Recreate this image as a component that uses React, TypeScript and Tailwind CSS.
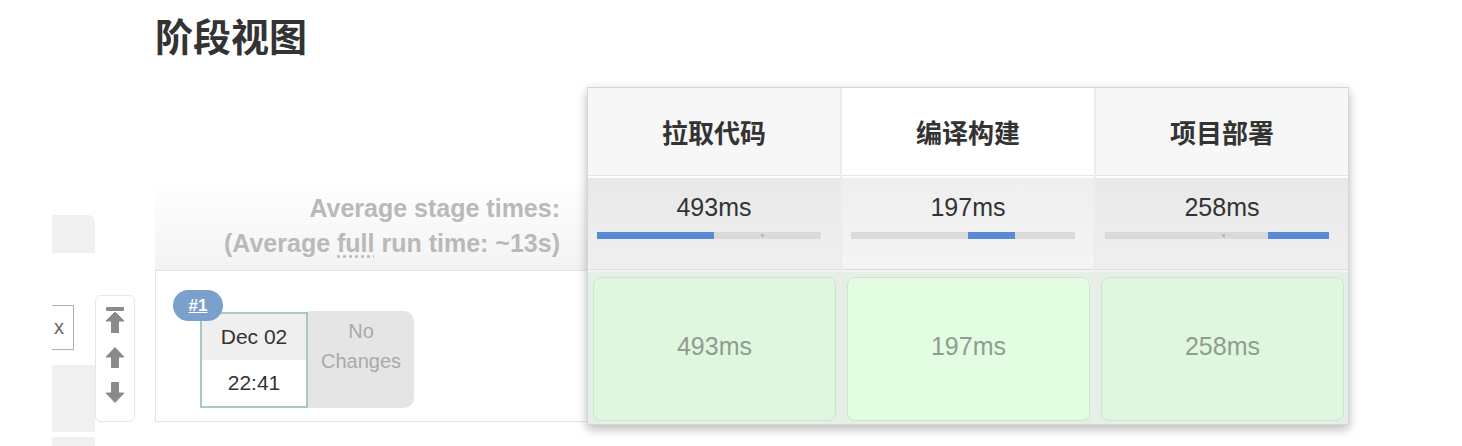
import React from "react";

const stages = [
  { name: "拉取代码", avg: "493ms", start: 0, width: 117, tick: 164, head: "bg-[#f7f7f7]", avgBg: "from-[#e9e9e9] to-[#efefef]", cell: "bg-[#dff7df]" },
  { name: "编译构建", avg: "197ms", start: 117, width: 47, tick: -1, head: "bg-white", avgBg: "from-[#efefef] to-[#f4f4f4]", cell: "bg-[#e3fde3]" },
  { name: "项目部署", avg: "258ms", start: 163, width: 61, tick: 117, head: "bg-[#f7f7f7]", avgBg: "from-[#e9e9e9] to-[#efefef]", cell: "bg-[#dff7df]" },
];

function TopIcon() {
  return (
    <svg width="20" height="26" viewBox="0 0 20 26">
      <rect x="1" y="0" width="18" height="4" rx="1" fill="#8a8a8a" />
      <polygon points="10,5 19,14 13.5,14 13.5,26 6.5,26 6.5,14 1,14" fill="#8a8a8a" strokeLinejoin="round" stroke="#8a8a8a" strokeWidth="1" />
    </svg>
  );
}
function UpIcon() {
  return (
    <svg width="20" height="21" viewBox="0 0 20 21">
      <polygon points="10,0.5 19,10 13.5,10 13.5,20.5 6.5,20.5 6.5,10 1,10" fill="#8a8a8a" strokeLinejoin="round" stroke="#8a8a8a" strokeWidth="1" />
    </svg>
  );
}
function DownIcon() {
  return (
    <svg width="20" height="21" viewBox="0 0 20 21">
      <polygon points="10,20.5 19,11 13.5,11 13.5,0.5 6.5,0.5 6.5,11 1,11" fill="#8a8a8a" strokeLinejoin="round" stroke="#8a8a8a" strokeWidth="1" />
    </svg>
  );
}

export default function App() {
  return (
    <div className="w-[1462px] h-[446px] bg-white overflow-hidden font-['Liberation_Sans','Noto_Sans_CJK_SC',sans-serif]">
      <div className="flex pl-[52px]">
        {/* partial sidebar */}
        <div className="mt-[215px] w-[43px] flex flex-col">
          <div className="h-[38px] bg-[#f0f0f0] rounded-tr-[7px]" />
          <div className="h-[112px] bg-white pt-[52px]">
            <div className="w-[22px] h-[45px] border-y border-r border-[#b0b0b0] bg-white text-[20px] leading-[43px] text-[#666] pl-[2px]">x</div>
          </div>
          <div className="h-[67px] bg-[#f0f0f0]" />
          <div className="h-[5px] bg-white" />
          <div className="h-[20px] bg-[#f0f0f0]" />
        </div>

        {/* arrows */}
        <div className="mt-[295px] w-[40px] h-[127px] border border-[#e6e6e6] rounded-[6px] flex flex-col items-center pt-[11px] gap-[14px]">
          <TopIcon />
          <UpIcon />
          <DownIcon />
        </div>

        {/* stage view */}
        <div className="ml-[20px] flex flex-col">
          <div className="h-[87px] pt-[15px]">
            <h2 className="font-['Noto_Sans_CJK_SC',sans-serif] font-bold text-[38px] leading-[40px] text-[#333]">阶段视图</h2>
          </div>
          <div className="flex">
            {/* left labels */}
            <div className="w-[432px] flex flex-col">
              <div className="h-[91px]" />
              <div className="h-[92px] bg-gradient-to-b from-white to-[#f3f3f3] flex flex-col items-end justify-center pt-[3px] pr-[27px] text-[25px] leading-[35px] font-bold text-[#b9b9b9]">
                <div>Average stage times:</div>
                <div>
                  (Average <span className="underline decoration-dotted underline-offset-4">full</span> run time: ~13s)
                </div>
              </div>
              <div className="h-[152px] border-y border-l border-[#e3e3e3] bg-white pl-[17px] pt-[19px]">
                <div className="relative flex w-[241px]">
                  <div className="absolute left-0 top-0 z-10 w-[50px] h-[31px] rounded-full bg-[#7aa0cb] text-white font-bold text-[17px] leading-[31px] text-center">
                    <span className="underline">#1</span>
                  </div>
                  <div className="ml-[27px] mt-[22px] w-[108px] h-[96px] border-2 border-[#a7ccb3] flex flex-col bg-white">
                    <div className="h-[46px] bg-[#efefef] text-[21px] leading-[46px] text-center text-[#333]">Dec 02</div>
                    <div className="flex-1 text-[21px] leading-[46px] text-center text-[#333]">22:41</div>
                  </div>
                  <div className="mt-[21px] w-[106px] h-[97px] bg-[#e5e5e5] rounded-r-[10px] text-[20px] leading-[30px] text-center text-[#a9a9a9] pt-[5px]">
                    No<br />Changes
                  </div>
                </div>
              </div>
            </div>

            {/* table */}
            <div className="w-[762px] h-[338px] border border-[#d6d6d6] bg-[#ececec] shadow-[0_4px_10px_rgba(0,0,0,0.28)] grid grid-cols-3 gap-x-[2px]">
              {stages.map((s) => (
                <div key={s.name} className="flex flex-col">
                  <div className={`h-[88px] ${s.head} border-b border-[#e6e6e6] flex items-center justify-center font-['Noto_Sans_CJK_SC',sans-serif] font-bold text-[26px] text-[#333]`}>
                    {s.name}
                  </div>
                  <div className="h-[2px] bg-white" />
                  <div className={`h-[92px] bg-gradient-to-b ${s.avgBg} border-b border-[#dcdcdc] flex flex-col`}>
                    <div className="text-[25px] leading-[28px] text-center text-[#333] mt-[15px]">{s.avg}</div>
                    <div className="relative ml-[9px] mt-[11px] w-[224px] h-[7px] bg-[#dadada]">
                      {s.tick >= 0 && (
                        <div className="absolute top-[2px] w-[3px] h-[3px] bg-[#bbbbbb]" style={{ left: s.tick }} />
                      )}
                      <div className="absolute top-0 h-[7px] bg-[#5a8ad5]" style={{ left: s.start, width: s.width }} />
                    </div>
                  </div>
                  <div className="h-[2px] bg-[#f3f3f3]" />
                  <div className="flex-1 bg-[#e6efe6] pl-[5px] pr-[4px] pt-[5px] pb-[3px]">
                    <div className={`h-full ${s.cell} border border-[#cfe3cf] rounded-[8px] flex items-center justify-center pb-[4px] text-[25px] text-[#909c90]`}>
                      {s.avg}
                    </div>
                  </div>
                </div>
              ))}
            </div>
          </div>
        </div>
      </div>
    </div>
  );
}
